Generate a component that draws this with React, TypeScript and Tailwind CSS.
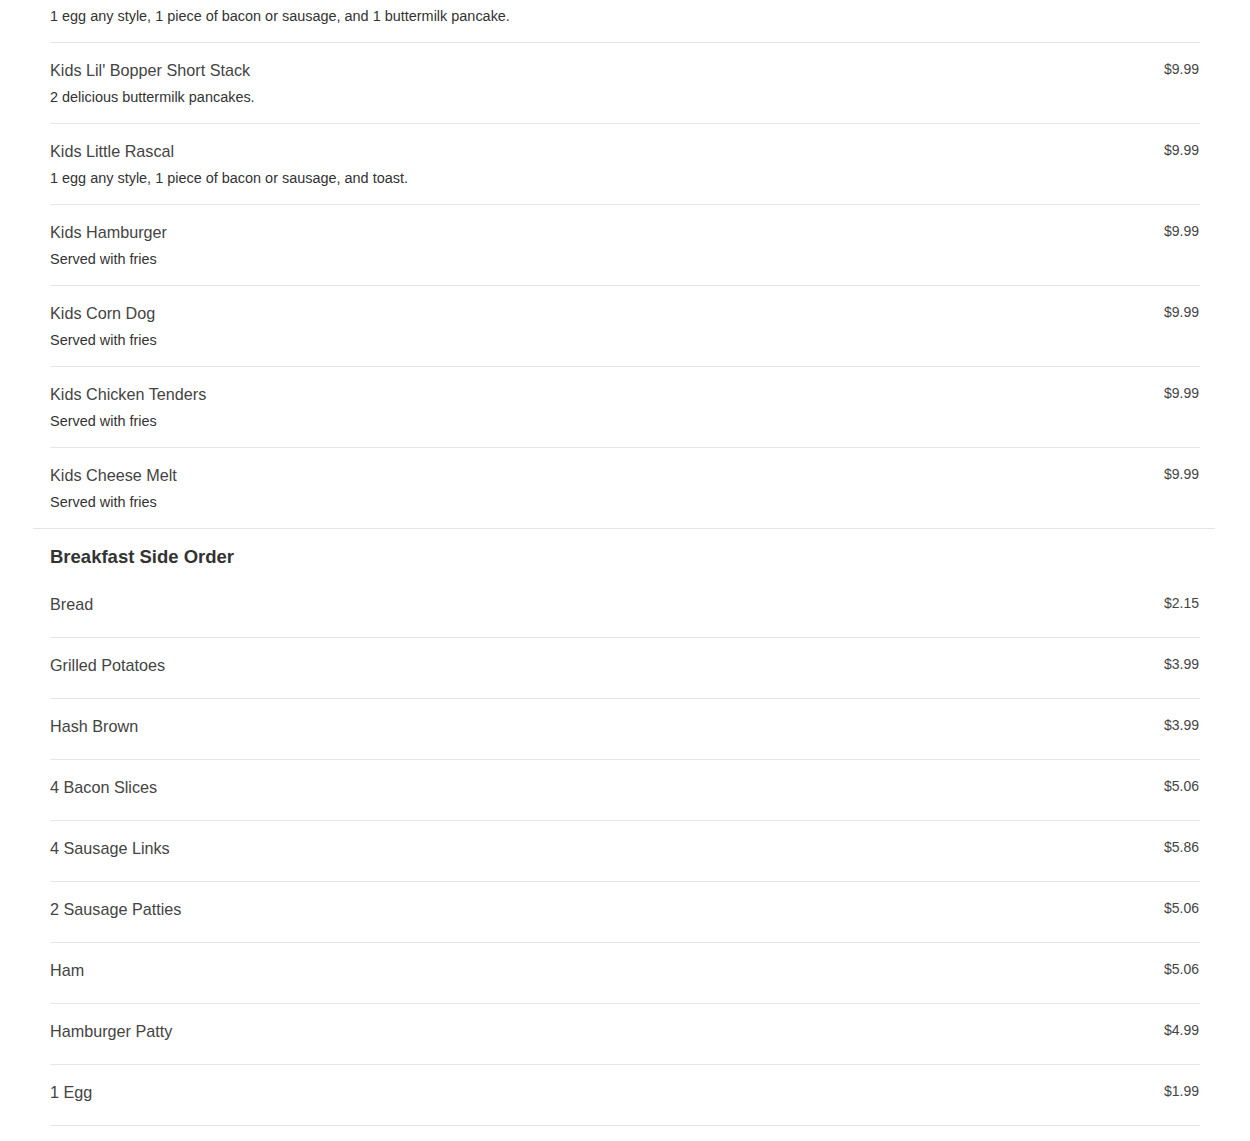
import React from "react";

type Item = { name: string; price: string; desc?: string };

const kids: Item[] = [
  { name: "Kids Lil' Bopper Short Stack", price: "$9.99", desc: "2 delicious buttermilk pancakes." },
  { name: "Kids Little Rascal", price: "$9.99", desc: "1 egg any style, 1 piece of bacon or sausage, and toast." },
  { name: "Kids Hamburger", price: "$9.99", desc: "Served with fries" },
  { name: "Kids Corn Dog", price: "$9.99", desc: "Served with fries" },
  { name: "Kids Chicken Tenders", price: "$9.99", desc: "Served with fries" },
  { name: "Kids Cheese Melt", price: "$9.99", desc: "Served with fries" },
];

const sides: Item[] = [
  { name: "Bread", price: "$2.15" },
  { name: "Grilled Potatoes", price: "$3.99" },
  { name: "Hash Brown", price: "$3.99" },
  { name: "4 Bacon Slices", price: "$5.06" },
  { name: "4 Sausage Links", price: "$5.86" },
  { name: "2 Sausage Patties", price: "$5.06" },
  { name: "Ham", price: "$5.06" },
  { name: "Hamburger Patty", price: "$4.99" },
  { name: "1 Egg", price: "$1.99" },
];

function Row({ item, last }: { item: Item; last?: boolean }) {
  return (
    <div
      className={
        "flex items-start justify-between pt-[16px] " +
        (item.desc ? "pb-[16px] " : "pb-[21px] ") +
        (last ? "" : "border-b border-[#e6e6e6]")
      }
    >
      <div className="flex flex-col">
        <div className="text-[16.2px] leading-[23px] text-[#444]">{item.name}</div>
        {item.desc && (
          <div className="mt-[5px] text-[14.45px] leading-[20px] text-[#333]">{item.desc}</div>
        )}
      </div>
      <div className="-mt-[1px] mr-[1px] text-[14px] leading-[22px] text-[#444]">{item.price}</div>
    </div>
  );
}

export default function App() {
  return (
    <div
      className="bg-white min-h-[1141px]"
      style={{ fontFamily: '"Liberation Sans", Arial, sans-serif' }}
    >
      <div className="ml-[33px] w-[1182px]">
        <div className="border-b border-[#e6e6e6] pl-[17px] pr-[15px]">
          <div className="pt-[6px] pb-[16px] border-b border-[#e6e6e6] text-[14.45px] leading-[20px] text-[#333]">
            1 egg any style, 1 piece of bacon or sausage, and 1 buttermilk pancake.
          </div>
          {kids.map((it, i) => (
            <Row key={it.name} item={it} last={i === kids.length - 1} />
          ))}
        </div>
        <div className="pl-[17px] pr-[15px]">
          <h2 className="pt-[16px] pb-[8px] text-[18.5px] leading-[24px] font-bold text-[#333]">
            Breakfast Side Order
          </h2>
          {sides.map((it) => (
            <Row key={it.name} item={it} />
          ))}
        </div>
      </div>
    </div>
  );
}
